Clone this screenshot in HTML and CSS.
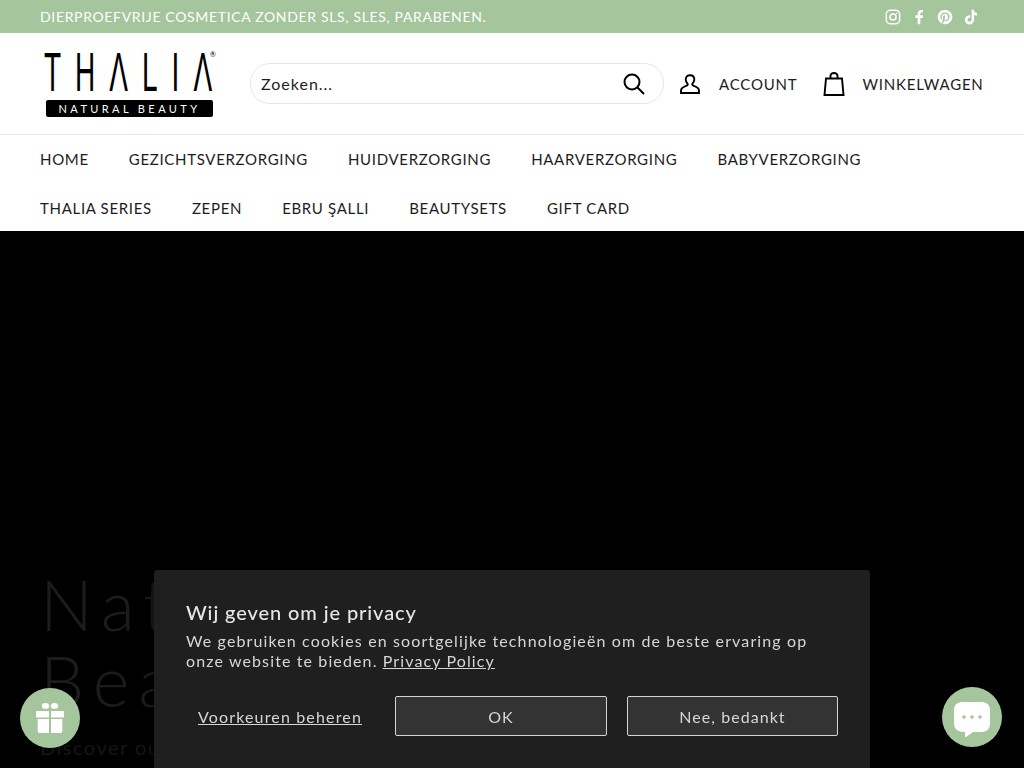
FILE: index.html
```html
<!DOCTYPE html>
<html lang="nl">
<head>
  <meta charset="UTF-8" />
  <meta name="viewport" content="width=device-width, initial-scale=1.0"/>
  <title>Thalia Natural Beauty</title>
  <link rel="stylesheet" href="styles.css">
</head>
<body>
  <div class="topbar">
    <span class="topbar-text">DIERPROEFVRIJE COSMETICA ZONDER SLS, SLES, PARABENEN.</span>
    <div class="socials">
      <svg viewBox="0 0 24 24" class="social-icon" fill="none" stroke="currentColor" stroke-width="2.2"><rect x="2" y="2" width="20" height="20" rx="5.5"/><circle cx="12" cy="12" r="4.6"/><circle cx="17.6" cy="6.4" r="1.2" fill="currentColor" stroke="none"/></svg>
      <svg viewBox="0 0 24 24" class="social-icon" fill="currentColor"><path d="M14 23v-9.6h3.4l.6-3.9h-4V7.2c0-1.2.5-2 2.1-2H18V1.6C17.500 1.500 16.400 1.400 15.200 1.400c-3 0-5.200 1.800-5.200 5.200v2.900H6.600v3.900H10V23z"/></svg>
      <svg viewBox="0 0 24 24" class="social-icon" fill="currentColor"><path d="M12 1a11 11 0 0 0-4 21.240c-.1-.87-.18-2.200.04-3.150l1.290-5.470s-.33-.66-.33-1.630c0-1.530.89-2.670 1.990-2.670.94 0 1.390.7 1.390 1.550 0 .94-.6 2.350-.91 3.650-.26 1.090.55 1.980 1.620 1.980 1.950 0 3.450-2.060 3.450-5.020 0-2.630-1.890-4.470-4.590-4.470-3.120 0-4.960 2.340-4.960 4.770 0 .94.36 1.950.81 2.500.09.110.1.2.08.310l-.3 1.230c-.05.2-.16.240-.37.150-1.370-.64-2.230-2.640-2.230-4.240 0-3.460 2.510-6.630 7.240-6.630 3.800 0 6.750 2.710 6.750 6.330 0 3.780-2.380 6.820-5.690 6.820-1.110 0-2.160-.58-2.510-1.260l-.68 2.610c-.25.950-.92 2.140-1.370 2.870A11 11 0 1 0 12 1z"/></svg>
      <svg viewBox="0 0 24 24" class="social-icon" fill="currentColor"><path d="M16.600 1h-3.700v15.100a3.100 3.100 0 1 1-3.100-3.100c.3 0 .6.050.9.130V9.400a6.900 6.900 0 1 0 5.900 6.800V8.500a8.300 8.300 0 0 0 4.400 1.300V6.100a4.700 4.700 0 0 1-4.400-5.100z"/></svg>
    </div>
  </div>

  <header class="header">
    <a class="logo" href="#">
      <span class="logo-top">
        <span class="logo-name">THΛLIΛ</span>
        <span class="logo-reg">®</span>
      </span>
      <span class="logo-sub">NATURAL BEAUTY</span>
    </a>
    <div class="search">
      <span class="search-text">Zoeken...</span>
      <svg viewBox="0 0 22 22" class="search-icon" fill="none" stroke="currentColor" stroke-width="2"><circle cx="9" cy="9" r="7.5"/><path d="M14.500 14.500L21 21"/></svg>
    </div>
    <a class="header-link account" href="#">
      <svg viewBox="0 0 20 20" class="account-icon" fill="none" stroke="currentColor" stroke-width="1.900"><path d="M10 1.200c-2.600 0-4.300 1.800-4.300 4.300 0 1.900 1 3.200 1.800 4.200.5.600.3 1.300-.3 1.600l-3.500 1.700c-1.600.8-2.700 1.800-2.700 3.300v2.700h18v-2.700c0-1.500-1.100-2.500-2.700-3.300l-3.500-1.700c-.6-.3-.8-1-.3-1.600.8-1 1.800-2.300 1.800-4.200 0-2.500-1.700-4.300-4.300-4.300z"/></svg>
      ACCOUNT
    </a>
    <a class="header-link cart" href="#">
      <svg viewBox="0 0 22 24" class="cart-icon" fill="none" stroke="currentColor" stroke-width="1.900"><path d="M3 6.500h16l1.500 16.500H1.500z"/><path d="M7.500 6.500v-3C7.500 2 9 1 11 1s3.500 1 3.500 2.500v3"/></svg>
      WINKELWAGEN
    </a>
  </header>

  <nav class="nav">
    <div class="nav-row">
      <a href="#">HOME</a>
      <a href="#">GEZICHTSVERZORGING</a>
      <a href="#">HUIDVERZORGING</a>
      <a href="#">HAARVERZORGING</a>
      <a href="#">BABYVERZORGING</a>
    </div>
    <div class="nav-row">
      <a href="#">THALIA SERIES</a>
      <a href="#">ZEPEN</a>
      <a href="#">EBRU ŞALLI</a>
      <a href="#">BEAUTYSETS</a>
      <a href="#">GIFT CARD</a>
    </div>
  </nav>

  <section class="hero">
    <h1 class="hero-title">Natural<br>Beauty</h1>
    <p class="hero-sub">Discover our products</p>
  </section>

  <div class="cookie">
    <h2 class="cookie-title">Wij geven om je privacy</h2>
    <p class="cookie-text">We gebruiken cookies en soortgelijke technologieën om de beste ervaring op onze website te bieden. <a href="#">Privacy Policy</a></p>
    <div class="cookie-actions">
      <a class="cookie-manage" href="#">Voorkeuren beheren</a>
      <button class="cookie-btn cookie-ok">OK</button>
      <button class="cookie-btn">Nee, bedankt</button>
    </div>
  </div>

  <button class="float-btn gift-btn" aria-label="Rewards">
    <svg viewBox="0 0 28 30" class="gift-icon" fill="#fff"><ellipse cx="9.500" cy="2.900" rx="3.700" ry="2.900"/><ellipse cx="18.500" cy="2.900" rx="3.700" ry="2.900"/><path d="M0 9c0-.6.400-1 1-1h12v6.500H0zM15 8h12c.6 0 1 .4 1 1v5.500H15zM1.700 16H13v14H4c-1.400 0-2.300-.9-2.300-2.300zM15 16h11.300v11.700c0 1.400-.9 2.300-2.300 2.300h-9z"/></svg>
  </button>

  <button class="float-btn chat-btn" aria-label="Chat">
    <svg viewBox="0 0 36 40" class="chat-icon"><path fill="#fff" d="M10 5h16c7 0 10 2.500 10 9v12c0 6.500-3 9-10 9h-7l-6.500 4.700c-.8.500-1.500.1-1.500-.8V35c-7 0-11-2.500-11-9V14c0-6.500 3-9 10-9z"/><circle cx="10" cy="20" r="1.800" fill="#a5c59d"/><circle cx="18" cy="20" r="1.800" fill="#a5c59d"/><circle cx="26" cy="20" r="1.800" fill="#a5c59d"/></svg>
  </button>
</body>
</html>
```

FILE: styles.css
```css
:root {
  --green: #a5c59d;
  --text: #1c1d1d;
  --line: #e8e8e1;
  --panel: #1f1f1f;
}

* {
  box-sizing: border-box;
}

html, body {
  height: 768px;
  overflow: hidden;
}

body {
  margin: 0;
  font-family: 'Lato', 'Open Sans', sans-serif;
  color: var(--text);
  background: #000;
}

a {
  color: inherit;
  text-decoration: none;
}

.topbar {
  height: 33px;
  padding: 0 40px;
  display: flex;
  align-items: center;
  justify-content: space-between;
  background: var(--green);
  color: #fff;
}

.topbar-text {
  font-size: 14px;
  letter-spacing: 0.66px;
}

.socials {
  display: flex;
  gap: 10px;
  margin-right: 5px;
}

.social-icon {
  width: 16px;
  height: 16px;
}

.header {
  height: 102px;
  padding: 0 40px 0 44px;
  display: flex;
  align-items: center;
  background: #fff;
  border-bottom: 1px solid var(--line);
}

.logo {
  width: 172px;
  flex: none;
  display: flex;
  flex-direction: column;
  color: #000;
}

.logo-top {
  position: relative;
  height: 42px;
}

.logo-name {
  display: block;
  width: 360px;
  font-family: 'Liberation Sans', sans-serif;
  font-size: 56px;
  line-height: 42px;
  letter-spacing: 28px;
  white-space: nowrap;
  transform: scaleX(0.5);
  transform-origin: left center;
}

.logo-reg {
  position: absolute;
  top: 0;
  left: 166px;
  font-size: 7px;
  line-height: 7px;
}

.logo-sub {
  margin: 7px 0 0 2px;
  width: 167px;
  height: 17px;
  background: #000;
  border-radius: 2px;
  color: #fff;
  font-size: 11px;
  line-height: 17px;
  letter-spacing: 3.4px;
  text-align: center;
  white-space: nowrap;
}

.search {
  width: 414px;
  height: 41px;
  flex: none;
  margin-left: 34px;
  padding: 0 18px 0 10px;
  display: flex;
  align-items: center;
  justify-content: space-between;
  border: 1px solid var(--line);
  border-radius: 20px;
}

.search-text {
  font-size: 16px;
  letter-spacing: 1px;
}

.search-icon {
  width: 22px;
  height: 22px;
  color: #000;
}

.header-link {
  display: flex;
  align-items: center;
  font-size: 15px;
  letter-spacing: 0.8px;
  white-space: nowrap;
}

.account {
  margin-left: 16px;
}

.account-icon {
  width: 20px;
  height: 20px;
  margin-right: 19px;
  color: #000;
}

.cart {
  margin-left: 26px;
}

.cart-icon {
  width: 22px;
  height: 24px;
  margin-right: 17px;
  color: #000;
}

.nav {
  height: 96px;
  padding: 0 40px;
  display: flex;
  flex-direction: column;
  gap: 2px;
  background: #fff;
  font-size: 15px;
  letter-spacing: 0.68px;
}

.nav-row {
  height: 47px;
  display: flex;
  align-items: center;
  gap: 40px;
  white-space: nowrap;
}

.hero {
  height: 537px;
  padding: 335px 40px 0;
  background: #000;
  color: #1c1c1c;
}

.hero-title {
  margin: 0;
  font-size: 70px;
  font-weight: 300;
  line-height: 76px;
  letter-spacing: 9px;
}

.hero-sub {
  margin: 17px 0 0;
  font-size: 20px;
  letter-spacing: 1.5px;
  color: #161616;
}

.cookie {
  position: fixed;
  left: 154px;
  top: 570px;
  width: 716px;
  height: 220px;
  padding: 30px 32px;
  background: var(--panel);
  border-radius: 4px;
  box-shadow: 0 0 12px rgba(0,0,0,0.6);
  color: #d6d6d6;
}

.cookie-title {
  margin: 0 0 7px;
  font-size: 20px;
  font-weight: 500;
  line-height: 24px;
  letter-spacing: 0.9px;
  color: #e6e6e6;
}

.cookie-text {
  margin: 0;
  font-size: 16px;
  line-height: 20px;
  letter-spacing: 1.12px;
}

.cookie-text a, .cookie-manage {
  text-decoration: underline;
}

.cookie-actions {
  margin-top: 25px;
  display: flex;
  gap: 20px;
  align-items: center;
}

.cookie-manage {
  width: 189px;
  padding-left: 12px;
  font-size: 16px;
  letter-spacing: 1.15px;
  white-space: nowrap;
}

.cookie-btn {
  width: 211px;
  height: 40px;
  background: #333;
  border: 1px solid #d6d6d6;
  border-radius: 2px;
  color: #d6d6d6;
  font-family: inherit;
  font-size: 16px;
  letter-spacing: 1.05px;
}

.cookie-ok {
  width: 212px;
}

.float-btn {
  position: fixed;
  width: 60px;
  height: 60px;
  padding: 0;
  display: flex;
  align-items: center;
  justify-content: center;
  border: none;
  border-radius: 50%;
  background: var(--green);
}

.gift-btn {
  left: 20px;
  top: 688px;
}

.gift-icon {
  width: 28px;
  height: 30px;
}

.chat-btn {
  left: 942px;
  top: 687px;
}

.chat-icon {
  width: 36px;
  height: 40px;
}
```
